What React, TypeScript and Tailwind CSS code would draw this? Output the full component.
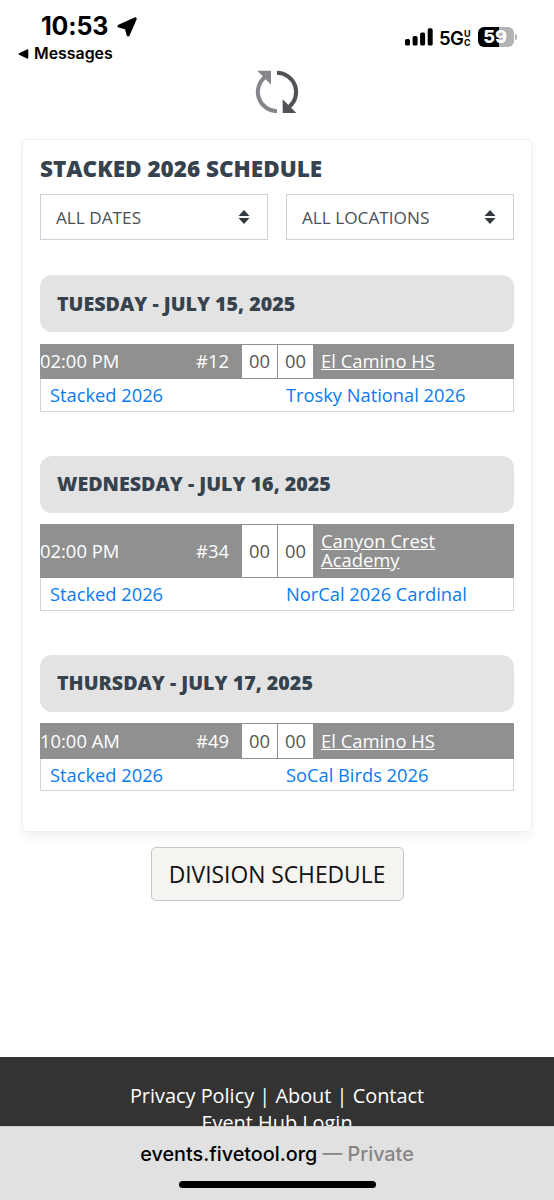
type Game = {
  day: string
  time: string
  number: string
  location: string
  home: string
  away: string
  tall?: boolean
}

const games: Game[] = [
  {
    day: 'Tuesday - July 15, 2025',
    time: '02:00 PM',
    number: '#12',
    location: 'El Camino HS',
    home: 'Stacked 2026',
    away: 'Trosky National 2026',
  },
  {
    day: 'Wednesday - July 16, 2025',
    time: '02:00 PM',
    number: '#34',
    location: 'Canyon Crest Academy',
    home: 'Stacked 2026',
    away: 'NorCal 2026 Cardinal',
    tall: true,
  },
  {
    day: 'Thursday - July 17, 2025',
    time: '10:00 AM',
    number: '#49',
    location: 'El Camino HS',
    home: 'Stacked 2026',
    away: 'SoCal Birds 2026',
  },
]

function StatusBar() {
  return (
    <div className="h-[64px] flex justify-between font-['Inter',sans-serif] text-black">
      <div className="pl-[18px] pt-[11px]">
        <div className="flex items-center pl-[23px] h-[31px]">
          <span className="w-[68px] pb-[2px] text-[25px] font-bold leading-[30px] tracking-[-0.2px]">10:53</span>
          <svg className="ml-[8px]" width="20" height="20" viewBox="0 0 20 20">
            <path
              d="M2 9 18.2 1.8 11.2 18 9.2 11Z"
              stroke="#000"
              strokeWidth="3"
              strokeLinejoin="round"
            />
          </svg>
        </div>
        <div className="flex items-center h-[24px]">
          <svg width="11" height="10" viewBox="0 0 11 10">
            <path d="M1.4 5 9.4 1.2v7.6Z" stroke="#000" strokeWidth="1.8" strokeLinejoin="round" />
          </svg>
          <span className="ml-[5px] text-[15.9px] font-semibold leading-[24px]">Messages</span>
        </div>
      </div>

      <div className="flex items-center h-[22px] mt-[26px] pr-[37px]">
        <svg width="28" height="18" viewBox="0 0 28 18">
          <rect x="0" y="11" width="5" height="6.5" rx="1.6" />
          <rect x="7.6" y="8" width="5" height="9.5" rx="1.6" />
          <rect x="15.1" y="4.5" width="5" height="13" rx="1.6" />
          <rect x="22.7" y="0.3" width="5" height="17.2" rx="1.6" />
        </svg>
        <span className="ml-[6px] w-[25px] pt-px text-[18.5px] font-semibold leading-[22px] tracking-[-0.6px]">5G</span>
        <span className="flex w-[7px] flex-col pt-px text-[9px] font-bold leading-[9px]">
          <span>U</span>
          <span>C</span>
        </span>
        <div className="ml-[7px] flex h-[20px] w-[36px] items-center justify-center rounded-[6px] bg-[linear-gradient(90deg,#000_0_58%,#b3b3b3_58%_100%)] pr-[2px]">
          <span className="text-[18px] font-extrabold leading-[20px] text-white">59</span>
        </div>
        <div className="ml-[1px] h-[6px] w-[2px] rounded-r-full bg-[#b3b3b3]" />
      </div>
    </div>
  )
}

function RefreshIcon() {
  return (
    <svg width="46" height="46" viewBox="0 0 46 46" fill="none">
      <path d="M23 42.2A19.2 19.2 0 0 1 10.7 8.3" stroke="#85868b" strokeWidth="4" />
      <path d="M3.3 1.7H17V15.7Z" fill="#85868b" />
      <path d="M23 3.8A19.2 19.2 0 0 1 35.3 37.7" stroke="#515157" strokeWidth="4" />
      <path d="M28.7 30.3V44H42.3Z" fill="#515157" />
    </svg>
  )
}

function Select({ label }: { label: string }) {
  return (
    <button className="flex h-[46px] flex-1 items-center justify-between border border-[#ced1da] bg-white pl-[15px] pr-[17px] text-[17.2px] font-medium uppercase text-[#495057]">
      <span className="pt-[2px]">{label}</span>
      <svg width="12" height="16" viewBox="0 0 12 16" fill="#343a40">
        <path d="M6 1 11.5 7H.5Z" />
        <path d="M6 15 .5 9h11Z" />
      </svg>
    </button>
  )
}

function GameDay({ game }: { game: Game }) {
  return (
    <section className="mb-[44px]">
      <h2 className="flex h-[57px] items-center rounded-[12px] bg-[#e3e3e3] pl-[17px] pb-px text-[19.65px] font-extrabold uppercase text-[#36434e]">
        {game.day}
      </h2>
      <div className="mt-[11.5px]">
        <div
          className={`flex items-center bg-[#909090] text-[18.4px] leading-[19px] text-white ${game.tall ? 'h-[54px]' : 'h-[35.5px]'}`}
        >
          <span className="w-[130px] pb-[2px]">{game.time}</span>
          <span className="w-[59px] pb-[2px] text-right">{game.number}</span>
          <div className="ml-[13px] flex gap-px self-stretch py-px text-[#555]">
            <span className="flex w-[35px] items-center justify-center bg-white pb-[2px]">00</span>
            <span className="flex w-[35px] items-center justify-center bg-white pb-[2px]">00</span>
          </div>
          <a className="ml-[8px] w-[150px] pb-[2px] underline">{game.location}</a>
        </div>
        <div className="flex h-[32.5px] items-center border border-t-0 border-[#d4d4d4] text-[18.3px] text-[#087bf0]">
          <a className="w-[236px] pl-[9px]">{game.home}</a>
          <a className="pl-[9px]">{game.away}</a>
        </div>
      </div>
    </section>
  )
}

export default function App() {
  return (
    <div className="flex h-[1200px] w-[554px] flex-col overflow-hidden bg-white font-['Open_Sans',sans-serif]">
      <StatusBar />

      <div className="flex h-[75px] justify-center pt-[5px]">
        <RefreshIcon />
      </div>

      <main className="mx-[22px] h-[693px] shrink-0 rounded-[5px] border border-[#efefef] px-[17px] pt-[14px] shadow-[0_5px_10px_rgba(60,20,30,0.06)]">
        <h1 className="text-[22.5px] font-extrabold uppercase leading-[30px] text-[#36434e]">
          Stacked 2026 Schedule
        </h1>
        <div className="mt-[10px] mb-[35.3px] flex gap-[18px]">
          <Select label="All Dates" />
          <Select label="All Locations" />
        </div>
        {games.map((game) => (
          <GameDay key={game.day} game={game} />
        ))}
      </main>

      <div className="mt-[15px] flex justify-center">
        <button className="h-[54px] w-[253px] rounded-[5px] border border-[#cbc4c6] bg-[#f5f4f1] pt-[2px] text-[22.8px] uppercase text-[#111]">
          Division Schedule
        </button>
      </div>

      <footer className="mt-auto h-[69px] shrink-0 overflow-hidden bg-[#333] pt-[25px] text-center text-[19.9px] leading-[27px] text-white">
        <p>Privacy Policy | About | Contact</p>
        <p>Event Hub Login</p>
      </footer>

      {/* browser address bar */}
      <div className="flex h-[74px] shrink-0 flex-col items-center border-t border-[#cfcfcf] bg-[#e1e1e1] font-['Inter',sans-serif]">
        <p className="mt-[13px] text-[19.8px] font-medium leading-[28px] text-black">
          events.fivetool.org <span className="text-[#858585]">— Private</span>
        </p>
        <div className="mt-[13px] h-[7px] w-[197px] rounded-full bg-black" />
      </div>
    </div>
  )
}
